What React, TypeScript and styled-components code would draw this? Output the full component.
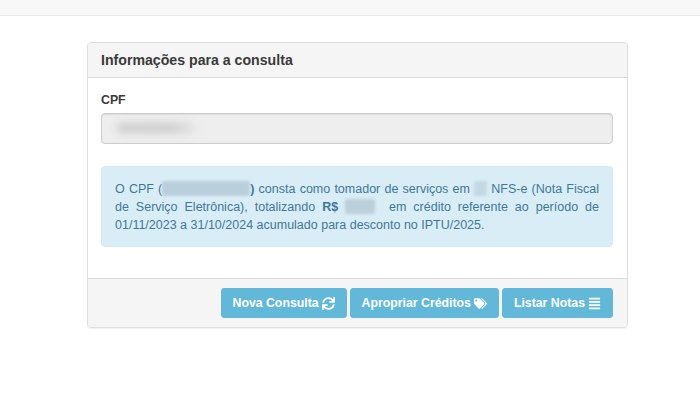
import styled, { createGlobalStyle } from "styled-components";
import { FaAlignJustify, FaSync, FaTags } from "react-icons/fa";

const GlobalStyle = createGlobalStyle`
  html, body {
    margin: 0;
    padding: 0;
    background: #fff;
    font-family: "Liberation Sans", Arial, sans-serif;
    color: #333;
  }
  * {
    box-sizing: border-box;
  }
`;

const Page = styled.div`
  width: 700px;
  height: 413px;
  overflow: hidden;
  background: #fff;
`;

const TopBar = styled.div`
  height: 16px;
  background: #f8f8f8;
  border-bottom: 1px solid #e9e9e9;
`;

const Panel = styled.section`
  width: 541px;
  margin: 26px 0 0 87px;
  border: 1px solid #ddd;
  border-radius: 4px;
  box-shadow: 0 1px 1px rgba(0, 0, 0, 0.05);
  overflow: hidden;
`;

const PanelHeading = styled.h3`
  margin: 0;
  height: 35px;
  padding: 0 13px;
  display: flex;
  align-items: center;
  background: #f5f5f5;
  border-bottom: 1px solid #ddd;
  font-size: 14.15px;
  font-weight: 700;
  color: #3a3a3a;
`;

const PanelBody = styled.div`
  height: 200px;
  padding: 16px 14px 0 13px;
`;

const Label = styled.label`
  display: block;
  height: 19px;
  font-size: 12.3px;
  line-height: 13px;
  font-weight: 700;
  color: #3a3a3a;
`;

const ReadonlyInput = styled.div`
  height: 31px;
  padding: 9px 14px;
  background: #eee;
  border: 1px solid #ccc;
  border-radius: 4px;
  box-shadow: inset 0 1px 1px rgba(0, 0, 0, 0.075);
`;

const BlurredValue = styled.div`
  width: 80px;
  height: 10px;
  background: linear-gradient(90deg, #cdcdcd, #cacaca 70%, #e4e4e4);
  border-radius: 5px;
  filter: blur(4px);
`;

const Alert = styled.div`
  margin-top: 22px;
  height: 81px;
  padding: 13px 13px 0;
  background: #d9edf7;
  border: 1px solid #d3e9f3;
  border-radius: 4px;
  color: #3f7896;
  font-size: 12.5px;
  line-height: 18px;
  text-align: justify;
`;

const Redacted = styled.span<{ $width: number; $tone: string }>`
  display: inline-block;
  width: ${(props) => props.$width}px;
  height: 15px;
  vertical-align: -3px;
  background: ${(props) => props.$tone};
  border-radius: 2px;
  filter: blur(1.5px);
`;

const PanelFooter = styled.div`
  height: 49px;
  padding: 9px 14px 0 13px;
  display: flex;
  justify-content: flex-end;
  gap: 3px;
  background: #f5f5f5;
  border-top: 1px solid #ddd;
`;

const Button = styled.button`
  height: 30px;
  padding: 0 11px;
  display: inline-flex;
  align-items: center;
  gap: 3px;
  background: #62b8d9;
  border: 1px solid #62b8d9;
  border-radius: 3px;
  color: #fff;
  font-family: inherit;
  font-size: 12.3px;
  font-weight: 700;
  white-space: nowrap;
`;

export default function App() {
  return (
    <Page>
      <GlobalStyle />
      <TopBar />
      <Panel>
        <PanelHeading>Informações para a consulta</PanelHeading>
        <PanelBody>
          <Label>CPF</Label>
          <ReadonlyInput>
            <BlurredValue />
          </ReadonlyInput>
          <Alert>
            O CPF (<Redacted $width={88} $tone="#b9cfdc" />
            <b>)</b> consta como tomador de serviços em{" "}
            <Redacted $width={13} $tone="#c4d8e3" /> NFS-e (Nota Fiscal de
            Serviço Eletrônica), totalizando <b>R$</b>{" "}
            <Redacted $width={30} $tone="#bcd0dc" />
            &nbsp; em crédito referente ao período de 01/11/2023 a 31/10/2024
            acumulado para desconto no IPTU/2025.
          </Alert>
        </PanelBody>
        <PanelFooter>
          <Button>
            Nova Consulta <FaSync size={13} />
          </Button>
          <Button>
            Apropriar Créditos <FaTags size={13} />
          </Button>
          <Button>
            Listar Notas <FaAlignJustify size={13} />
          </Button>
        </PanelFooter>
      </Panel>
    </Page>
  );
}
